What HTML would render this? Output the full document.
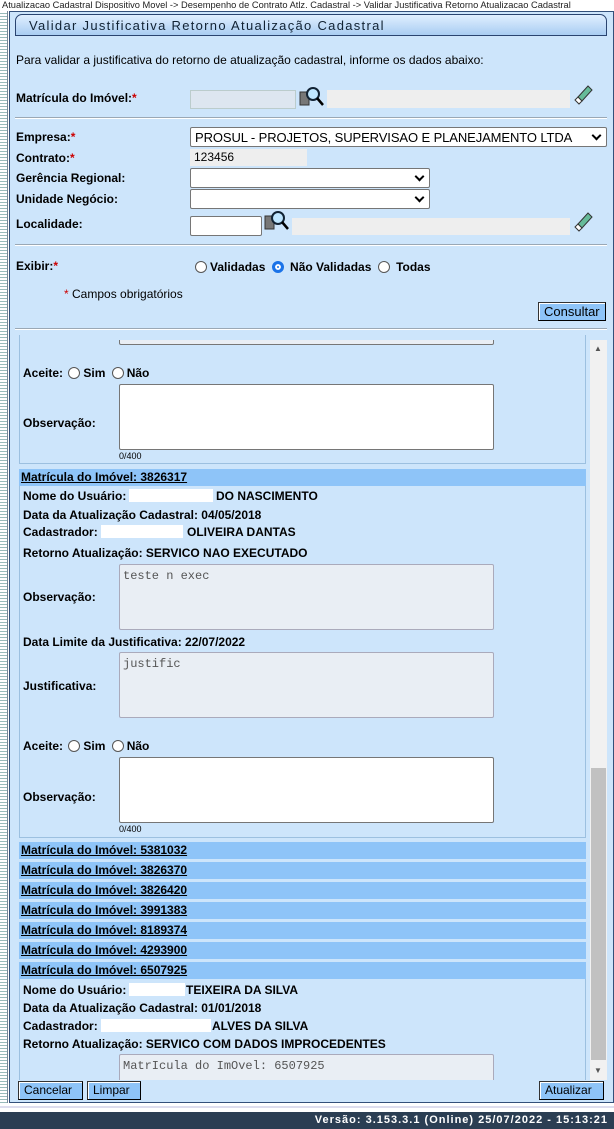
<!DOCTYPE html>
<html><head><meta charset="utf-8"><style>
*{box-sizing:border-box;margin:0;padding:0}
body{width:614px;height:1129px;position:relative;background:#fff;font-family:"Liberation Sans",Arial,sans-serif;font-size:12px;color:#000;overflow:hidden}
.a{position:absolute;white-space:nowrap}
.b{font-weight:bold}
.r{color:#c00}
.in{position:absolute;border:1px solid #767676;background:#fff;height:20px}
.gray{position:absolute;background:#eee;border:none}
.sel{position:absolute;border:1px solid #767676;background:#fff;border-radius:2px;height:20px;white-space:nowrap;overflow:hidden}
.sel:after{content:"";position:absolute;right:6px;top:4px;width:5px;height:5px;border-right:2px solid #000;border-bottom:2px solid #000;transform:rotate(45deg)}
.hr{position:absolute;left:15px;width:592px;height:2px;background:#9aa8b5;border-bottom:1px solid #fff}
.ta{position:absolute;left:119px;width:375px;border:1px solid #767676;background:#fff;border-radius:2px}
.tad{background:#e9eef4;border-color:#aab;color:#555;font-family:"Liberation Mono",monospace;font-size:12px;padding:4px 3px}
.hd{position:absolute;left:19px;width:567px;height:17px;background:#8ec4f8;font-weight:bold;text-decoration:underline;padding:1px 2px}
.rad{display:inline-block;width:12px;height:12px;border:1px solid #555;border-radius:50%;background:#fff;vertical-align:-2px;margin-right:3px}
.btn{position:absolute;background:#8ec4f8;border:1px solid #333;border-right-color:#000;border-bottom-color:#000;height:19px;font-size:12px;padding:1px 5px;box-shadow:inset 1px 1px 0 #fff}
.blk{position:absolute;background:#fff}
</style></head><body>
<div class="a" style="left:2px;top:0;font-size:9.3px;color:#222">Atualizacao Cadastral Dispositivo Movel -&gt; Desempenho de Contrato Atlz. Cadastral -&gt; Validar Justificativa Retorno Atualizacao Cadastral</div>
<div style="position:absolute;left:0;top:11px;width:8px;height:1092px;background:repeating-linear-gradient(#fff 0 2px,#9bb 2px 3px);border-right:1px solid #789"></div>
<div style="position:absolute;left:9px;top:11px;width:605px;height:1092px;background:#cde5fb;border:1px solid #33507a"></div>
<div class="a" style="left:15px;top:14px;width:592px;height:22px;border:1px solid #2a4470;border-radius:7px 7px 0 0;background:linear-gradient(#e0efff,#a9cdf2);padding:3px 13px;font-size:13px;letter-spacing:1.3px;color:#123">Validar Justificativa Retorno Atualização Cadastral</div>
<div class="a" style="left:16px;top:53px">Para validar a justificativa do retorno de atualização cadastral, informe os dados abaixo:</div>
<div class="a b" style="left:16px;top:91px">Matrícula do Imóvel:<span class="r">*</span></div>
<div class="gray" style="left:190px;top:90px;width:106px;height:19px;background:#dde6f0;border:1px solid #bcc"></div>
<svg class="a" style="left:299px;top:86px" width="26" height="22" viewBox="0 0 26 22"><rect x="1" y="6" width="9" height="13" fill="#777" stroke="#333"/><circle cx="14" cy="8" r="6" fill="#bfe6ff" stroke="#123" stroke-width="2"/><path d="M18 12l6 7" stroke="#000" stroke-width="2.5"/></svg>
<div class="gray" style="left:327px;top:90px;width:243px;height:18px"></div>
<svg class="a" style="left:574px;top:83px" width="20" height="22" viewBox="0 0 20 22"><path d="M4 14l10-11 4 4-10 11z" fill="#6b9" stroke="#333"/><path d="M4 14l4 4-3 3-4-4z" fill="#fff" stroke="#333"/></svg>
<div class="hr" style="top:117px"></div>
<div class="a b" style="left:16px;top:130px">Empresa:<span class="r">*</span></div>
<div class="sel" style="left:190px;top:127px;width:417px;padding:2px 4px;font-size:13px;letter-spacing:-0.1px">PROSUL - PROJETOS, SUPERVISAO E PLANEJAMENTO LTDA</div>
<div class="a b" style="left:16px;top:151px">Contrato:<span class="r">*</span></div>
<div class="gray a" style="left:190px;top:149px;width:117px;height:17px;padding:0 4px;line-height:16px">123456</div>
<div class="a b" style="left:16px;top:171px">Gerência Regional:</div>
<div class="sel" style="left:190px;top:168px;width:240px"></div>
<div class="a b" style="left:16px;top:192px">Unidade Negócio:</div>
<div class="sel" style="left:190px;top:189px;width:240px"></div>
<div class="a b" style="left:16px;top:217px">Localidade:</div>
<div class="in" style="left:190px;top:216px;width:72px;border-radius:2px"></div>
<svg class="a" style="left:264px;top:210px" width="26" height="22" viewBox="0 0 26 22"><rect x="1" y="6" width="9" height="13" fill="#777" stroke="#333"/><circle cx="14" cy="8" r="6" fill="#bfe6ff" stroke="#123" stroke-width="2"/><path d="M18 12l6 7" stroke="#000" stroke-width="2.5"/></svg>
<div class="gray" style="left:292px;top:218px;width:278px;height:17px"></div>
<svg class="a" style="left:574px;top:210px" width="20" height="22" viewBox="0 0 20 22"><path d="M4 14l10-11 4 4-10 11z" fill="#6b9" stroke="#333"/><path d="M4 14l4 4-3 3-4-4z" fill="#fff" stroke="#333"/></svg>
<div class="hr" style="top:244px"></div>
<div class="a b" style="left:16px;top:259px">Exibir:<span class="r">*</span></div>
<div class="a b" style="left:195px;top:260px"><span class="rad"></span>Validadas <span class="rad" style="margin-left:3px;border:3px solid #1a73e8;box-shadow:inset 0 0 0 2px #fff;background:#1a73e8"></span> Não Validadas <span class="rad" style="margin-left:3px"></span> Todas</div>
<div class="a" style="left:64px;top:287px"><span class="r">*</span> Campos obrigatórios</div>
<div class="btn" style="left:538px;top:302px;width:68px;font-size:13px">Consultar</div>
<div class="hr" style="top:328px"></div>

<div style="position:absolute;left:15px;top:340px;width:592px;height:740px;overflow:hidden;background:#cde5fb">
 <div style="position:absolute;left:575px;top:0;width:17px;height:740px;background:#f1f1f1"></div>
 <div style="position:absolute;left:576px;top:428px;width:15px;height:292px;background:#c1c1c1"></div>
 <div class="a" style="left:579px;top:4px;font-size:8px;color:#555">▲</div>
 <div class="a" style="left:579px;top:726px;font-size:8px;color:#555">▼</div>
</div>
<div style="position:absolute;left:19px;top:335px;width:567px;height:129px;border:1px solid #9cc0e0;border-top:none"></div>
<div style="position:absolute;left:15px;top:340px;width:560px;height:6px;overflow:hidden"><div class="ta" style="left:104px;top:-10px;height:15px;background:#e9eef4"></div></div>
<div class="a b" style="left:23px;top:366px">Aceite: <span class="rad" style="margin-left:2px"></span>Sim <span class="rad" style="margin-left:3px"></span>Não</div>
<div class="ta" style="top:384px;height:66px"></div>
<div class="a b" style="left:23px;top:416px">Observação:</div>
<div class="a" style="left:119px;top:451px;font-size:9px">0/400</div>
<div class="hd" style="top:469px">Matrícula do Imóvel: 3826317</div>
<div style="position:absolute;left:19px;top:486px;width:567px;height:352px;border:1px solid #9cc0e0;border-top:none"></div>
<div class="a b" style="left:23px;top:489px">Nome do Usuário: <span class="blk" style="left:106px;top:0;width:84px;height:13px"></span><span style="position:absolute;left:193px">DO NASCIMENTO</span></div>
<div class="a b" style="left:23px;top:508px">Data da Atualização Cadastral: 04/05/2018</div>
<div class="a b" style="left:23px;top:525px">Cadastrador: <span class="blk" style="left:78px;top:0;width:82px;height:13px"></span><span style="position:absolute;left:164px">OLIVEIRA DANTAS</span></div>
<div class="a b" style="left:23px;top:546px">Retorno Atualização: SERVICO NAO EXECUTADO</div>
<div class="ta tad" style="top:564px;height:66px">teste n exec</div>
<div class="a b" style="left:23px;top:590px">Observação:</div>
<div class="a b" style="left:23px;top:635px">Data Limite da Justificativa: 22/07/2022</div>
<div class="ta tad" style="top:652px;height:66px">justific</div>
<div class="a b" style="left:23px;top:679px">Justificativa:</div>
<div class="a b" style="left:23px;top:739px">Aceite: <span class="rad" style="margin-left:2px"></span>Sim <span class="rad" style="margin-left:3px"></span>Não</div>
<div class="ta" style="top:757px;height:66px"></div>
<div class="a b" style="left:23px;top:790px">Observação:</div>
<div class="a" style="left:119px;top:824px;font-size:9px">0/400</div>
<div class="hd" style="top:842px">Matrícula do Imóvel: 5381032</div>
<div class="hd" style="top:862px">Matrícula do Imóvel: 3826370</div>
<div class="hd" style="top:882px">Matrícula do Imóvel: 3826420</div>
<div class="hd" style="top:902px">Matrícula do Imóvel: 3991383</div>
<div class="hd" style="top:922px">Matrícula do Imóvel: 8189374</div>
<div class="hd" style="top:942px">Matrícula do Imóvel: 4293900</div>
<div class="hd" style="top:962px">Matrícula do Imóvel: 6507925</div>
<div style="position:absolute;left:19px;top:979px;width:567px;height:101px;border-left:1px solid #9cc0e0;border-right:1px solid #9cc0e0"></div>
<div class="a b" style="left:23px;top:983px">Nome do Usuário: <span class="blk" style="left:106px;top:0;width:56px;height:13px"></span><span style="position:absolute;left:163px">TEIXEIRA DA SILVA</span></div>
<div class="a b" style="left:23px;top:1001px">Data da Atualização Cadastral: 01/01/2018</div>
<div class="a b" style="left:23px;top:1019px">Cadastrador: <span class="blk" style="left:78px;top:0;width:110px;height:13px"></span><span style="position:absolute;left:189px">ALVES DA SILVA</span></div>
<div class="a b" style="left:23px;top:1037px">Retorno Atualização: SERVICO COM DADOS IMPROCEDENTES</div>
<div style="position:absolute;left:15px;top:1054px;width:575px;height:26px;overflow:hidden"><div class="ta tad" style="left:104px;top:0;height:60px">MatrIcula do ImOvel: 6507925</div></div>

<div class="btn" style="left:18px;top:1081px;width:65px">Cancelar</div>
<div class="btn" style="left:87px;top:1081px;width:54px">Limpar</div>
<div class="btn" style="left:539px;top:1081px;width:65px">Atualizar</div>
<div style="position:absolute;left:0;top:1106px;width:614px;height:2px;background:#dde"></div>
<div class="a" style="left:0;top:1112px;width:614px;height:17px;background:#2b3e53;color:#fff;font-weight:bold;font-size:11px;letter-spacing:1px;text-align:right;padding:2px 6px 0 0">Versão: 3.153.3.1 (Online) 25/07/2022 - 15:13:21</div>
</body></html>
